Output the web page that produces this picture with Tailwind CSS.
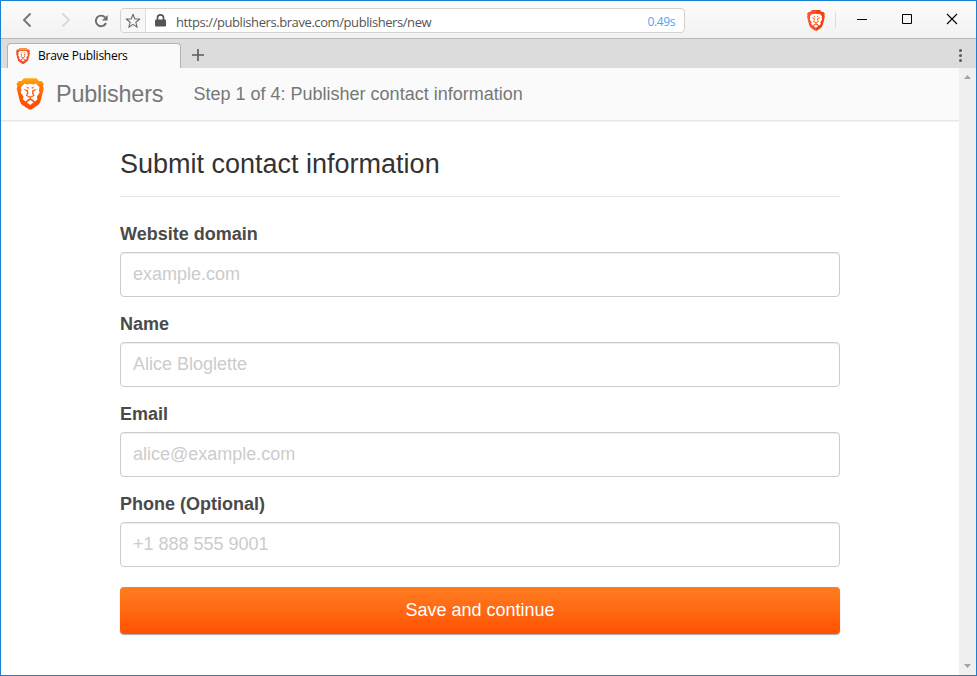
<!DOCTYPE html>
<html lang="en">
<head>
<meta charset="utf-8">
<title>Brave Publishers</title>
<script src="https://cdn.jsdelivr.net/npm/@tailwindcss/browser@4"></script>
</head>
<body class="w-[977px] h-[676px] overflow-hidden bg-white">
<svg width="0" height="0" class="absolute">
  <defs>
    <linearGradient id="amber" x1="0" y1="0" x2="0" y2="1"><stop offset="0" stop-color="#ffac10"/><stop offset=".28" stop-color="#ff7a08"/><stop offset=".6" stop-color="#ff5500"/><stop offset="1" stop-color="#ff4c00"/></linearGradient>
    <linearGradient id="red" x1="0" y1="0" x2="1" y2="0"><stop offset=".5" stop-color="#fb542b"/><stop offset=".5" stop-color="#ee4410"/></linearGradient>
    <path id="shield" d="M7.2 .4H19.8L22.3 3.2L25 3.3L27.2 6.3L26.3 8.2L27 11L23.8 23.5Q23 26 21 27.5L15.3 31.3Q13.5 32.3 11.7 31.3L6 27.5Q4 26 3.2 23.5L0 11L.7 8.2L-.2 6.3L2 3.3L4.7 3.2Z"/>
    <g id="face">
      <path fill="#fff" d="M7.800 5.800L10.500 6.600L13.500 6L16.500 6.600L19.200 5.800L22.800 9.800L22.200 12.400L22.900 15L20.200 18.600L20.800 21.500L18.300 23.800L15.600 21.500L13.500 20.600L11.400 21.500L8.700 23.800L6.200 21.500L6.800 18.600L4.100 15L4.800 12.400L4.200 9.800Z"/>
      <path fill="#fff" d="M13.500 22.300L17 24.500L13.500 27.200L10 24.500Z"/>
      <path fill="#ff5c0c" d="M6.300 11.300L11.200 12.300L11.800 15.200L10.600 17.600L13.500 18.600L16.400 17.600L15.200 15.200L15.800 12.300L20.700 11.300L17 13.700L16.600 15L17.900 17.900L14.200 19.900V21.200H12.800V19.900L9.100 17.900L10.400 15L10 13.700ZM9 8.800L12.200 9.600L11.600 11.200ZM18 8.800L14.800 9.600L15.400 11.200Z"/>
    </g>
  </defs>
</svg>
<div class="flex h-full w-full flex-col border border-[#1b7fd4]">
  <!-- Navigation toolbar -->
  <div class="flex h-[38px] shrink-0 items-start border-b border-[#b8b8b8] bg-linear-to-b from-[#fcfcfc] to-[#f2f2f2]">
    <svg class="ml-[19px] mt-[11px] h-4 w-4 shrink-0" viewBox="0 0 16 16" fill="none" stroke="#737373" stroke-width="1.900"><path d="M10.500 1.500L4 8l6.500 6.500"/></svg>
    <svg class="ml-[21px] mt-[11px] h-4 w-4 shrink-0" viewBox="0 0 16 16" fill="none" stroke="#d9d9d9" stroke-width="1.900"><path d="M5.500 1.500L12 8l-6.500 6.500"/></svg>
    <svg class="ml-5 mt-3 h-4 w-4 shrink-0" viewBox="0 0 16 16"><path fill="none" stroke="#6b6b6b" stroke-width="1.900" d="M12.200 4.500A5.300 5.300 0 1 0 13 10"/><path fill="#6b6b6b" d="M14.600 2v5.600H9Z"/></svg>
    <div class="ml-[11px] mt-[7px] flex h-[25px] w-[565px] items-center rounded border border-[#d3d3d3] bg-white">
      <div class="flex h-full w-[25px] shrink-0 items-center justify-center rounded-l border-r border-[#dddddd] bg-[#f7f7f7]">
        <svg class="h-4 w-4" viewBox="0 0 16 16" fill="none" stroke="#6b6b6b" stroke-width="1.100" stroke-linejoin="round"><path d="M8 1.300L9.800 6h5l-4 3.200 1.400 5.100L8 11.400l-4.200 2.900 1.400-5.100-4-3.200h5Z"/></svg>
      </div>
      <svg class="ml-[9px] h-[13px] w-[11px] shrink-0" viewBox="0 0 11 13"><path fill="none" stroke="#555" stroke-width="1.700" d="M2.500 6V3.800a3 3 0 0 1 6 0V6"/><rect y="5.500" width="11" height="7" rx="1" fill="#555"/></svg>
      <span class="ml-[10px] mt-[2px] whitespace-nowrap font-['Open_Sans',sans-serif] text-[13px] leading-[18px] tracking-[-0.420px] text-[#555]">https://publishers.brave.com/publishers/new</span>
      <span class="ml-auto mr-[9px] mt-[2px] font-['Open_Sans',sans-serif] text-xs leading-[18px] tracking-[-0.400px] text-[#48a7f5]">0.49s</span>
    </div>
    <svg class="ml-[122px] mt-[9px] h-[21px] w-[18px] shrink-0" viewBox="-.2 .3 27.500 31.700" preserveAspectRatio="none"><use href="#shield" fill="url(#red)"/><use href="#face"/></svg>
    <div class="ml-[10px] mt-[11px] h-4 w-px bg-[#dcdcdc]"></div>
    <svg class="ml-[21px] mt-[12px] h-3 w-[102px] shrink-0" viewBox="0 0 102 12" fill="none" stroke="#000"><path d="M0 6.500h10"/><path d="M45.500 1.500h9v9h-9Z"/><path d="M90 1l10 10M100 1L90 11" stroke-width="1.100"/></svg>
  </div>
  <!-- Tabs -->
  <div class="flex h-[29px] shrink-0 items-end bg-[#dcdcdc]">
    <div class="ml-[6px] flex h-[25px] w-[174px] items-center rounded-t border border-b-0 border-[#b3b3b3] bg-[#fafafa] pl-2">
      <svg class="h-4 w-[14px] shrink-0" viewBox="-.2 .3 27.500 31.700" preserveAspectRatio="none"><use href="#shield" fill="#f0522e"/><path fill="#f7983b" d="M7.200 .4H19.800L22.300 3.200L25 3.300L26 5H1L2 3.300L4.700 3.200Z"/><use href="#face"/></svg>
      <span class="ml-2 whitespace-nowrap font-['Open_Sans',sans-serif] text-xs font-medium leading-4 tracking-[-0.250px] text-black">Brave Publishers</span>
    </div>
    <svg class="mb-[7px] ml-[11px] h-3 w-3" viewBox="0 0 12 12" stroke="#5b5b5b" stroke-width="1.600"><path d="M6 0v12M0 6h12"/></svg>
    <svg class="mb-[5px] ml-auto mr-[14px] h-[15px] w-[3px]" viewBox="0 0 3 15" fill="#5a5a5a"><circle cx="1.500" cy="2.500" r="1.500"/><circle cx="1.500" cy="7.500" r="1.500"/><circle cx="1.500" cy="12.500" r="1.500"/></svg>
  </div>
  <!-- Page -->
  <div class="flex min-h-0 flex-1 font-['Liberation_Sans',Arial,sans-serif] text-lg">
    <div class="flex-1">
      <header class="flex h-[53px] items-center border-b border-[#e7e7e7] bg-[#fafafa] pl-[15px] text-[#777] shadow-[0_1px_1px_rgba(0,0,0,0.04)]">
        <svg class="h-8 w-7 shrink-0" viewBox="-.7 .2 28 32"><use href="#shield" fill="url(#amber)"/><use href="#face"/></svg>
        <span class="ml-3 w-[108px] whitespace-nowrap text-[23.400px] tracking-[-0.2px]">Publishers</span>
        <span class="ml-[29.500px] whitespace-nowrap">Step 1 of 4: Publisher contact information</span>
      </header>
      <main class="ml-[119px] w-[720px] pt-7">
        <h1 class="h-12 border-b border-[#e3e3e3] text-[27px] leading-[30px] text-[#333]">Submit contact information</h1>
        <form class="mt-6">
          <label class="block h-[31px] font-bold leading-[26px] text-[#4a4a4a]">Website domain</label>
          <input class="block h-[45px] w-full rounded border border-[#ccc] px-3 shadow-[inset_0_1px_1px_rgba(0,0,0,0.075)] placeholder:text-[#ccc]" placeholder="example.com">
          <label class="mt-[14px] block h-[31px] font-bold leading-[26px] text-[#4a4a4a]">Name</label>
          <input class="block h-[45px] w-full rounded border border-[#ccc] px-3 shadow-[inset_0_1px_1px_rgba(0,0,0,0.075)] placeholder:text-[#ccc]" placeholder="Alice Bloglette">
          <label class="mt-[14px] block h-[31px] font-bold leading-[26px] text-[#4a4a4a]">Email</label>
          <input class="block h-[45px] w-full rounded border border-[#ccc] px-3 shadow-[inset_0_1px_1px_rgba(0,0,0,0.075)] placeholder:text-[#ccc]" placeholder="alice@example.com">
          <label class="mt-[14px] block h-[31px] font-bold leading-[26px] text-[#4a4a4a]">Phone (Optional)</label>
          <input class="block h-[45px] w-full rounded border border-[#ccc] px-3 shadow-[inset_0_1px_1px_rgba(0,0,0,0.075)] placeholder:text-[#ccc]" placeholder="+1 888 555 9001">
          <button type="button" class="mt-5 block h-[47px] w-full rounded bg-linear-to-b from-[#ff7d20] to-[#ff5000] pb-[2px] text-white shadow-[0_1px_1px_rgba(0,0,0,0.35)]">Save and continue</button>
        </form>
      </main>
    </div>
    <div class="flex w-[17px] shrink-0 flex-col items-center justify-between bg-[#f0f0f0] pb-[7px] pt-[7px]">
      <svg class="h-1 w-[7px]" viewBox="0 0 7 4" fill="#a3a3a3"><path d="M0 4L3.500 0L7 4Z"/></svg>
      <svg class="h-1 w-[7px]" viewBox="0 0 7 4" fill="#a3a3a3"><path d="M0 0L3.500 4L7 0Z"/></svg>
    </div>
  </div>
</div>
</body>
</html>
